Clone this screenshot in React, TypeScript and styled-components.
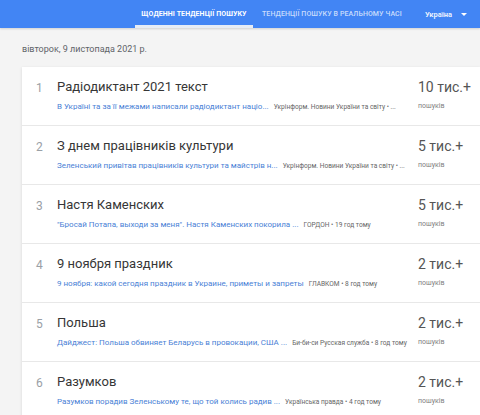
import React from "react";
import styled, { createGlobalStyle } from "styled-components";

const Global = createGlobalStyle`
  html, body { margin: 0; padding: 0; background: #f4f4f4; overflow: hidden; }
  body { font-family: Roboto, "Noto Sans", Arial, sans-serif; width: 480px; height: 415px; }
`;

const Header = styled.header`
  height: 28px;
  background: #4285f4;
  display: flex;
  align-items: stretch;
  padding-left: 135px;
  box-shadow: 0 1px 2px rgba(0,0,0,0.15);
`;

const Tab = styled.div<{ $active?: boolean }>`
  display: flex;
  align-items: center;
  justify-content: center;
  padding: 0 9px;
  width: ${(p) => (p.$active ? "100px" : "auto")};
  font-size: 7px;
  font-weight: ${(p) => (p.$active ? 700 : 500)};
  letter-spacing: 0.1px;
  color: ${(p) => (p.$active ? "#fff" : "rgba(255,255,255,0.72)")};
  border-bottom: 3px solid ${(p) => (p.$active ? "#e6ecf5" : "transparent")};
  padding-top: 3px;
  white-space: nowrap;
`;

const Country = styled.div`
  margin-left: 14px;
  display: flex;
  align-items: center;
  gap: 9px;
  font-size: 7.5px;
  font-weight: 700;
  color: rgba(255,255,255,0.9);
`;

const Caret = styled.span`
  width: 0;
  height: 0;
  border-left: 3px solid transparent;
  border-right: 3px solid transparent;
  border-top: 3px solid #fff;
`;

const Main = styled.main`
  padding: 16px 0 0 22px;
`;

const DateLine = styled.div`
  font-size: 9px;
  color: #5f6368;
  margin-bottom: 13px;
`;

const Card = styled.div`
  width: 458px;
  background: #fff;
  box-shadow: 0 1px 3px rgba(0,0,0,0.12);
`;

const Row = styled.div`
  height: 59px;
  display: grid;
  grid-template-columns: 21px 361px 1fr;
  padding-left: 14px;
  box-sizing: border-box;
  border-bottom: 1px solid #e8e8e8;
  align-items: start;
  padding-top: 12px;
`;

const Num = styled.div`
  font-size: 12px;
  line-height: 16px;
  color: #9aa0a6;
  padding-top: 1px;
`;

const Body = styled.div`
  display: flex;
  flex-direction: column;
  gap: 5px;
  min-width: 0;
`;

const Title = styled.div`
  font-size: 13px;
  color: #363636;
  line-height: 16px;
`;

const Meta = styled.div`
  display: flex;
  align-items: baseline;
  gap: 5px;
  white-space: nowrap;
  padding-top: 2px;
  line-height: 10px;
`;

const Snippet = styled.span`
  font-size: 8px;
  color: #4a7fd6;
`;

const Source = styled.span`
  font-size: 6.6px;
  color: #666;
`;

const Count = styled.div`
  display: flex;
  flex-direction: column;
  gap: 6px;
  white-space: nowrap;
`;

const CountNum = styled.div`
  font-size: 14px;
  font-weight: 400;
  color: #555;
  line-height: 17px;
`;

const CountLabel = styled.div`
  font-size: 7px;
  line-height: 9px;
  color: #808080;
`;

const items = [
  { t: "Радіодиктант 2021 текст", s: "В Україні та за її межами написали радіодиктант націо...", src: "Укрінформ. Новини України та світу • ...", c: "10 тис.+" },
  { t: "З днем працівників культури", s: "Зеленський привітав працівників культури та майстрів н...", src: "Укрінформ. Новини України та світу • ...", c: "5 тис.+" },
  { t: "Настя Каменских", s: "\"Бросай Потапа, выходи за меня\". Настя Каменских покорила ...", src: "ГОРДОН • 19 год тому", c: "5 тис.+" },
  { t: "9 ноября праздник", s: "9 ноября: какой сегодня праздник в Украине, приметы и запреты", src: "ГЛАВКОМ • 8 год тому", c: "2 тис.+" },
  { t: "Польша", s: "Дайджест: Польша обвиняет Беларусь в провокации, США ...", src: "Би-би-си Русская служба • 8 год тому", c: "2 тис.+" },
  { t: "Разумков", s: "Разумков порадив Зеленському те, що той колись радив ...", src: "Українська правда • 4 год тому", c: "2 тис.+" },
];

export default function App() {
  return (
    <>
      <Global />
      <Header>
        <Tab $active>ЩОДЕННІ ТЕНДЕНЦІЇ ПОШУКУ</Tab>
        <Tab>ТЕНДЕНЦІЇ ПОШУКУ В РЕАЛЬНОМУ ЧАСІ</Tab>
        <Country>
          Україна <Caret />
        </Country>
      </Header>
      <Main>
        <DateLine>вівторок, 9 листопада 2021 р.</DateLine>
        <Card>
          {items.map((it, i) => (
            <Row key={i}>
              <Num>{i + 1}</Num>
              <Body>
                <Title>{it.t}</Title>
                <Meta>
                  <Snippet>{it.s}</Snippet>
                  <Source>{it.src}</Source>
                </Meta>
              </Body>
              <Count>
                <CountNum>{it.c}</CountNum>
                <CountLabel>пошуків</CountLabel>
              </Count>
            </Row>
          ))}
        </Card>
      </Main>
    </>
  );
}
